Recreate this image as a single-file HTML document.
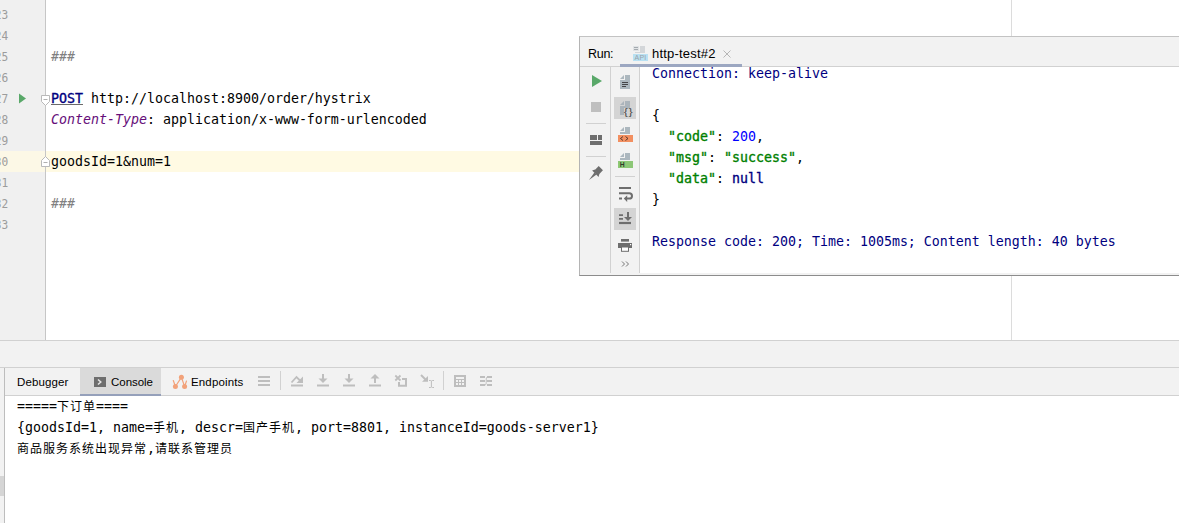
<!DOCTYPE html>
<html lang="zh">
<head>
<meta charset="utf-8">
<title>http-test</title>
<style>
html,body{margin:0;padding:0;}
body{width:1179px;height:523px;position:relative;overflow:hidden;background:#fff;font-family:"Liberation Sans","Noto Sans CJK SC",sans-serif;}
.abs{position:absolute;}
.mono{font-family:"DejaVu Sans Mono","Liberation Mono","Noto Sans CJK SC",monospace;font-size:13.29px;white-space:pre;line-height:21px;height:21px;}
.ln{position:absolute;left:-16px;width:24.2px;text-align:right;color:#9c9c9c;font-size:13px;transform:scaleX(0.86);transform-origin:100% 50%;}
.code{position:absolute;left:51px;color:#000;}
.kw{color:#000080;-webkit-text-stroke:0.35px #000080;}
.ul{text-decoration:underline;text-decoration-color:#6a6a6a;text-decoration-thickness:1px;text-underline-offset:0.5px;}
.hd{color:#660e7a;font-style:italic;}
.cm{color:#808080;font-style:italic;}
.k{color:#008000;-webkit-text-stroke:0.35px #008000;}
.n{color:#0000ff;}
.nv{color:#000080;}
.r{position:absolute;left:652px;color:#000;}
.r.nv{color:#000080;}
.ui{font-size:12px;color:#000;white-space:pre;position:absolute;}
.cj{font-family:"Noto Sans CJK SC",sans-serif;font-size:12px;letter-spacing:1px;}
.con{position:absolute;left:17px;color:#000;}
</style>
</head>
<body>
<!-- editor -->
<div class="abs" id="gutter" style="left:0;top:0;width:45px;height:340px;background:#f0f0f0;"></div>
<div class="abs" style="left:0;top:151px;width:45px;height:21px;background:#fcf8e6;"></div>
<div class="abs" style="left:46px;top:151px;width:533px;height:21px;background:#fffae3;"></div>
<div class="abs" style="left:45px;top:0;width:1px;height:340px;background:#c6c6c6;"></div>
<div class="abs" style="left:1011px;top:0;width:1px;height:340px;background:#dcdcdc;"></div>

<div class="mono ln" style="top:4px">23</div>
<div class="mono ln" style="top:25px">24</div>
<div class="mono ln" style="top:46px">25</div>
<div class="mono ln" style="top:67px">26</div>
<div class="mono ln" style="top:88px">27</div>
<div class="mono ln" style="top:109px">28</div>
<div class="mono ln" style="top:130px">29</div>
<div class="mono ln" style="top:151px">30</div>
<div class="mono ln" style="top:172px">31</div>
<div class="mono ln" style="top:193px">32</div>
<div class="mono ln" style="top:214px">33</div>

<div class="mono code cm" style="top:46px">###</div>
<div class="mono code" style="top:88px"><span class="kw ul">POST</span> http://localhost:8900/order/hystrix</div>
<div class="mono code" style="top:109px"><span class="hd">Content-Type</span>: application/x-www-form-urlencoded</div>
<div class="mono code" style="top:151px">goodsId=1&amp;num=1</div>
<div class="mono code cm" style="top:193px">###</div>

<!-- gutter icons -->
<svg class="abs" style="left:18px;top:93px" width="9" height="11" viewBox="0 0 9 11"><path d="M1 0.5 L8 5.5 L1 10.5 Z" fill="#59a869"/></svg>
<svg class="abs" style="left:40px;top:94px" width="11" height="13" viewBox="0 0 11 13"><path d="M1.5 1.5 H9.5 V7.5 L5.5 11.5 L1.5 7.5 Z" fill="#fff" stroke="#b9b9b9" stroke-width="1"/><path d="M3.5 5.5 H7.5" stroke="#b0b0b0" stroke-width="1"/></svg>
<svg class="abs" style="left:40px;top:155px" width="11" height="13" viewBox="0 0 11 13"><path d="M1.5 11.5 H9.5 V5.5 L5.5 1.5 L1.5 5.5 Z" fill="#fff" stroke="#b9b9b9" stroke-width="1"/><path d="M3.5 7.5 H7.5" stroke="#b0b0b0" stroke-width="1"/></svg>

<!-- run panel -->
<div class="abs" id="run" style="left:579px;top:36px;width:600px;height:240px;background:#f2f2f2;box-sizing:border-box;border-left:1px solid #b4b4b4;border-top:1px solid #c3c3c3;border-bottom:1px solid #8c8c8c;"></div>
<div class="abs" style="left:640px;top:67px;width:539px;height:206px;background:#fff;"></div>
<div class="abs" style="left:580px;top:66px;width:599px;height:1px;background:#d1d1d1;"></div>
<div class="abs" style="left:610px;top:67px;width:1px;height:206px;background:#d1d1d1;"></div>
<div class="abs" style="left:639px;top:67px;width:1px;height:206px;background:#d1d1d1;"></div>
<div class="abs" style="left:620px;top:64px;width:122px;height:3px;background:#9ca7c1;"></div>
<div class="ui" style="left:588px;top:47px;font-size:12.5px;line-height:15px;letter-spacing:-0.3px;">Run:</div>
<div class="ui" style="left:652px;top:46px;font-size:13px;line-height:15px;letter-spacing:0.2px;">http-test#2</div>
<svg class="abs" style="left:722px;top:49px" width="10" height="10" viewBox="0 0 10 10"><path d="M1.5 1.5 L8.5 8.5 M8.5 1.5 L1.5 8.5" stroke="#b6b6b6" stroke-width="1" fill="none"/></svg>
<!-- api icon -->
<svg class="abs" style="left:633px;top:46px" width="16" height="15" viewBox="0 0 16 15"><rect x="0" y="0" width="6" height="5" fill="#e0e3e5"/><rect x="7" y="0" width="5" height="7" fill="#d3d6d9"/><rect x="2" y="6" width="10" height="1" fill="#d3d6d9"/><path d="M1 1.500 H5 M1 3.500 H5" stroke="#a4aaaf" stroke-width="1"/><rect x="0" y="8" width="15" height="7" fill="#b9e1f3"/><text x="7.500" y="14" font-family="Liberation Sans, sans-serif" font-size="7" fill="#9aa2a8" text-anchor="middle" letter-spacing="0.3">API</text></svg>

<!-- toolbar 1 -->
<svg class="abs" style="left:580px;top:67px" width="30" height="206" viewBox="0 0 30 206">
<path d="M12 8 L22 14 L12 20 Z" fill="#59a869"/>
<rect x="11" y="35" width="10" height="10" fill="#bfbfbf"/>
<path d="M6 56.500 H26" stroke="#d1d1d1"/>
<path d="M10 68 h7 v5 h-7z M18 68 h4 v5 h-4z M10 74 h12 v4 h-12z" fill="#6e6e6e"/>
<path d="M6 89.500 H26" stroke="#d1d1d1"/>
<g transform="translate(15,107) rotate(45)" fill="#6e6e6e">
<rect x="-3" y="-8.200" width="6" height="5.400"/>
<path d="M-3 -3.200 L-4.600 -0.500 H4.600 L3 -3.200 Z"/>
<path d="M-1.500 -0.700 H1.500 L0 8.500 Z"/>
</g>
</svg>

<!-- toolbar 2 -->
<svg class="abs" style="left:611px;top:67px" width="28" height="206" viewBox="0 0 28 206">
<!-- text file : icon origin (6,7) -->
<g transform="translate(6,7)">
<path d="M7 1 L3 5 h4 z" fill="#9aa7b0" fill-opacity="0.8"/>
<path d="M8 1 v5 H3 v9 h10 V1 z" fill="#9aa7b0" fill-opacity="0.8"/>
<path d="M5 8 h6 v1 h-6z M5 10 h6 v1 h-6z M5 12 h4 v1 h-4z" fill="#231f20" fill-opacity="0.75"/>
</g>
<!-- json selected : origin (6,33) -->
<rect x="3" y="30" width="22" height="22" fill="#d4d4d4"/>
<g transform="translate(6,33)">
<path d="M7 1 L3 5 h4 z" fill="#9aa7b0" fill-opacity="0.7"/>
<path d="M8 1 v5 H3 v9 h4 V8 h6 V1 z" fill="#9aa7b0" fill-opacity="0.7"/>
<text transform="translate(11.600,14.800) scale(1.300,1)" x="0" y="0" font-family="Liberation Sans, sans-serif" font-size="9.800" fill="#484848" text-anchor="middle" letter-spacing="0.500">{}</text>
</g>
<!-- xml : origin (6,59) -->
<g transform="translate(6,59)">
<path d="M7 1 L3 5 h4 z" fill="#9aa7b0" fill-opacity="0.8"/>
<path d="M8 1 v5 H3 v2 h10 V1 z" fill="#9aa7b0" fill-opacity="0.8"/>
<rect x="1" y="9" width="15" height="7" fill="#f26522" fill-opacity="0.7"/>
<path d="M6 10.500 L3.500 12.500 L6 14.500 M8.500 10.500 L11 12.500 L8.500 14.500" stroke="#231f20" stroke-opacity="0.75" stroke-width="1" fill="none"/>
</g>
<!-- html : origin (6,85) -->
<g transform="translate(6,85)">
<path d="M7 1 L3 5 h4 z" fill="#9aa7b0" fill-opacity="0.8"/>
<path d="M8 1 v5 H3 v2 h10 V1 z" fill="#9aa7b0" fill-opacity="0.8"/>
<rect x="1" y="9" width="15" height="7" fill="#62b543" fill-opacity="0.7"/>
<text x="5.200" y="15" font-family="Liberation Sans, sans-serif" font-weight="bold" font-size="6.800" fill="#231f20" fill-opacity="0.85" text-anchor="middle">H</text>
</g>
<path d="M4 109.500 H24" stroke="#d1d1d1"/>
<!-- soft wrap -->
<path d="M8 121 h12 M8 126.200 h10.300 a2.700 2.700 0 0 1 0 5.400 h-2.500 M8 131.600 h3" stroke="#6e6e6e" stroke-width="2" fill="none"/>
<path d="M16.200 128.300 v6.600 l-3.400 -3.300 z" fill="#6e6e6e"/>
<!-- scroll to end selected -->
<rect x="3" y="141" width="22" height="22" fill="#d4d4d4"/>
<path d="M8 148.200 h4 M8 151.800 h4" stroke="#6e6e6e" stroke-width="1.800" fill="none"/>
<path d="M8 156 h12" stroke="#6e6e6e" stroke-width="2.200" fill="none"/>
<path d="M16 145 h2 v5 h3 l-4 4 l-4 -4 h3 z" fill="#6e6e6e"/>
<!-- print -->
<rect x="10" y="172" width="8" height="2.600" fill="#6e6e6e"/>
<rect x="7" y="176" width="14" height="5" fill="#6e6e6e"/>
<rect x="10.500" y="180" width="7" height="4.300" fill="#fff" stroke="#6e6e6e" stroke-width="1"/>
<rect x="19" y="177" width="1.200" height="1.200" fill="#fff"/>
<!-- more -->
<path d="M11 194.500 l2.500 2.500 l-2.500 2.500 M15 194.500 l2.500 2.500 l-2.500 2.500" stroke="#777" stroke-width="1" fill="none"/>
</svg>

<!-- response text -->
<div class="mono r nv" style="top:63px">Connection: keep-alive</div>
<div class="mono r" style="top:105px">{</div>
<div class="mono r" style="top:126px">  <span class="k">"code"</span>: <span class="n">200</span>,</div>
<div class="mono r" style="top:147px">  <span class="k">"msg"</span>: <span class="k">"success"</span>,</div>
<div class="mono r" style="top:168px">  <span class="k">"data"</span>: <span class="kw">null</span></div>
<div class="mono r" style="top:189px">}</div>
<div class="mono r nv" style="top:231px">Response code: 200; Time: 1005ms; Content length: 40 bytes</div>

<!-- bottom -->
<div class="abs" style="left:0;top:340px;width:1179px;height:1px;background:#d1d1d1;"></div>
<div class="abs" style="left:0;top:341px;width:1179px;height:26px;background:#f2f2f2;"></div>
<div class="abs" style="left:0;top:367px;width:1179px;height:1px;background:#d1d1d1;"></div>
<div class="abs" style="left:0;top:368px;width:1179px;height:27px;background:#f2f2f2;"></div>
<div class="abs" style="left:0;top:395px;width:1179px;height:1px;background:#d1d1d1;"></div>
<div class="abs" style="left:0;top:395px;width:4px;height:128px;background:#f2f2f2;"></div>
<div class="abs" style="left:0;top:476px;width:4px;height:20px;background:#d5d5d5;"></div>
<div class="abs" style="left:4px;top:368px;width:1px;height:155px;background:#bdbdbd;"></div>
<div class="abs" style="left:80px;top:368px;width:81px;height:27px;background:#dadada;"></div>
<div class="abs" style="left:80px;top:394px;width:81px;height:2px;background:#95a0ba;"></div>
<div class="ui" style="left:17px;top:375px;line-height:14px;font-size:11.5px;letter-spacing:0.12px;">Debugger</div>
<svg class="abs" style="left:94px;top:377px" width="12" height="10" viewBox="0 0 12 10"><rect width="12" height="10" fill="#6e6e6e"/><path d="M4 2.500 L6.800 5 L4 7.500" stroke="#e6e6e6" stroke-width="1.500" fill="none"/></svg>
<div class="ui" style="left:111px;top:375px;line-height:14px;font-size:11.5px;letter-spacing:-0.03px;">Console</div>
<svg class="abs" style="left:166px;top:370px" width="30" height="24" viewBox="0 0 30 24"><path d="M7.300 10.500 L9.400 16.500 L15.400 7.300 L18.600 16.500 L20.500 11" stroke="#f2a27a" stroke-width="1.200" fill="none" stroke-linecap="round"/><circle cx="15.400" cy="7.300" r="2.500" fill="#f2a27a"/><circle cx="9.400" cy="16.500" r="2.500" fill="#f2a27a"/><circle cx="18.600" cy="16.500" r="2.500" fill="#f2a27a"/></svg>
<div class="ui" style="left:191px;top:375px;line-height:14px;font-size:11.5px;letter-spacing:0.15px;">Endpoints</div>

<svg class="abs" style="left:250px;top:368px" width="260" height="27" viewBox="0 0 260 27">
<path d="M30.500 3 V22 M193.500 3 V22" stroke="#d1d1d1" stroke-width="1"/>
<g fill="#bebebe" stroke="none">
<!-- menu -->
<rect x="8" y="8" width="12" height="2"/><rect x="8" y="12" width="12" height="2"/><rect x="8" y="16" width="12" height="2"/>
<!-- step over -->
<rect x="41" y="16.500" width="12" height="2"/>
<path d="M53 8.500 V15 H46.500 Z"/>
<!-- step into -->
<rect x="67" y="16.500" width="12" height="2"/><rect x="72" y="6" width="2" height="5"/><path d="M68.500 10.500 H77.500 L73 15 Z"/>
<rect x="93" y="16.500" width="12" height="2"/><rect x="98" y="6" width="2" height="5"/><path d="M94.500 10.500 H103.500 L99 15 Z"/>
<!-- step out -->
<rect x="119" y="16.500" width="12" height="2"/><rect x="124" y="10" width="2" height="5"/><path d="M120.500 10.500 H129.500 L125 6 Z"/>
<!-- run to cursor head -->
<path d="M178 8 V13.800 H172 Z"/>
<!-- calculator -->
<rect x="204" y="7" width="12" height="12"/>
<!-- trace -->
<rect x="230" y="8" width="5" height="2"/><rect x="230" y="12" width="5" height="2"/><rect x="230" y="16" width="5" height="2"/>
<rect x="237" y="8" width="5" height="2"/><rect x="237" y="12" width="5" height="2"/><rect x="237" y="16" width="5" height="2"/>
</g>
<g fill="#f2f2f2" stroke="none">
<rect x="206" y="9" width="8" height="2"/>
<rect x="206" y="12" width="2" height="2"/><rect x="209" y="12" width="2" height="2"/><rect x="212" y="12" width="2" height="2"/>
<rect x="206" y="15" width="2" height="2"/><rect x="209" y="15" width="2" height="2"/><rect x="212" y="15" width="2" height="2"/>
</g>
<g fill="none" stroke="#bebebe">
<path d="M41.500 14.500 L46.500 9 L50.500 13" stroke-width="1.800"/>
<path d="M145.300 7.500 L150.500 12.500 M150.500 7.500 L145.300 12.500" stroke-width="1.800"/>
<path d="M152 11 H156 V17.800 H149 V14" stroke-width="2"/>
<path d="M171 7 L176 12" stroke-width="2"/>
<path d="M181.400 12.500 V19.500 M179 12.500 H180.800 M182.200 12.500 H184 M179 19.500 H180.800 M182.200 19.500 H184" stroke-width="1"/>
<path d="M235 17 C237.500 17 235 9 237.500 9" stroke-width="1"/>
</g>
</svg>

<!-- console -->
<div class="mono con" style="top:395px">=====<span class="cj">下订单</span>====</div>
<div class="mono con" style="top:416px">{goodsId=1, name=<span class="cj">手机</span>, descr=<span class="cj">国产手机</span>, port=8801, instanceId=goods-server1}</div>
<div class="mono con" style="top:437px"><span class="cj">商品服务系统出现异常</span>,<span class="cj">请联系管理员</span></div>
</body>
</html>
